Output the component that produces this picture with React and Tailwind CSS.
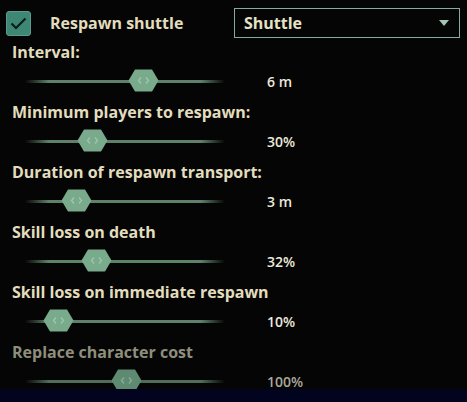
import React from "react";

const rows = [
  { label: "Interval:", value: "6 m", pos: 143 },
  { label: "Minimum players to respawn:", value: "30%", pos: 92 },
  { label: "Duration of respawn transport:", value: "3 m", pos: 76 },
  { label: "Skill loss on death", value: "32%", pos: 96 },
  { label: "Skill loss on immediate respawn", value: "10%", pos: 58 },
  { label: "Replace character cost", value: "100%", pos: 126, disabled: true },
];

function Thumb({ disabled }) {
  const fill = disabled ? "#5f8a72" : "#79aa8c";
  const arrow = disabled ? "#86b098" : "#9dc8ad";
  return (
    <svg width="31" height="23" viewBox="0 0 31 23">
      <polygon points="7,0.5 24,0.5 30.5,11.5 24,22.5 7,22.5 0.5,11.5" fill={fill} />
      <path d="M13 8.5 L10.5 11.5 L13 14.5" stroke={arrow} strokeWidth="1.3" fill="none" />
      <path d="M18 8.5 L20.5 11.5 L18 14.5" stroke={arrow} strokeWidth="1.3" fill="none" />
    </svg>
  );
}

function Row({ label, value, pos, disabled }) {
  return (
    <div className="flex flex-col h-[60px]">
      <div
        className={`pl-[12px] h-[20px] leading-[20px] text-[16px] font-bold ${
          disabled ? "text-[#8f8e7c]" : "text-[#e2ddbd]"
        }`}
      >
        {label}
      </div>
      <div className="flex items-center h-[22px] mt-[8px]">
        <div className="relative ml-[25px] w-[200px] h-[22px] flex items-center">
          <div
            className={`w-full h-[3px] ${
              disabled
                ? "bg-[linear-gradient(90deg,transparent,#4f6d5b_12%,#4f6d5b_88%,transparent)]"
                : "bg-[linear-gradient(90deg,transparent,#5f806b_12%,#5f806b_88%,transparent)]"
            }`}
          />
          <div className="absolute top-[-1px]" style={{ left: pos - 25 - 15 }}>
            <Thumb disabled={disabled} />
          </div>
        </div>
        <div
          className={`ml-[42px] text-[14px] font-semibold ${
            disabled ? "text-[#a9a89c]" : "text-[#ece9dc]"
          }`}
        >
          {value}
        </div>
      </div>
    </div>
  );
}

export default function App() {
  return (
    <div
      className="w-[467px] h-[402px] bg-[#050505] flex flex-col overflow-hidden"
      style={{ fontFamily: '"Open Sans", "Noto Sans", sans-serif' }}
    >
      <div className="h-[389px] overflow-hidden flex flex-col">
        <div className="flex items-center pt-[8px] h-[38px]">
          <div className="w-[234px] flex items-center">
            <div className="ml-[6px] w-[25px] h-[25px] rounded-[3px] bg-[#3f8775] border border-[#5a9c8a] flex items-center justify-center">
              <svg width="17" height="13" viewBox="0 0 17 13">
                <path d="M1.5 6.5 L6 11 L15.5 1.5" stroke="#0b1f19" strokeWidth="2.2" fill="none" />
              </svg>
            </div>
            <div className="ml-[19px] text-[16px] font-bold text-[#e2ddbd]">Respawn shuttle</div>
          </div>
          <div className="w-[226px] h-[30px] border border-[#86aa9b] flex items-center pl-[9px] pr-[10px]">
            <span className="text-[16px] font-bold text-[#e6e2c6]">Shuttle</span>
            <svg className="ml-auto" width="10" height="6" viewBox="0 0 10 6">
              <polygon points="0,0 10,0 5,6" fill="#a4c4b4" />
            </svg>
          </div>
        </div>
        <div className="flex flex-col mt-[4px]">
          {rows.map((r) => (
            <Row key={r.label} {...r} />
          ))}
        </div>
      </div>
      <div className="h-[13px] bg-[#02041f]" />
    </div>
  );
}
